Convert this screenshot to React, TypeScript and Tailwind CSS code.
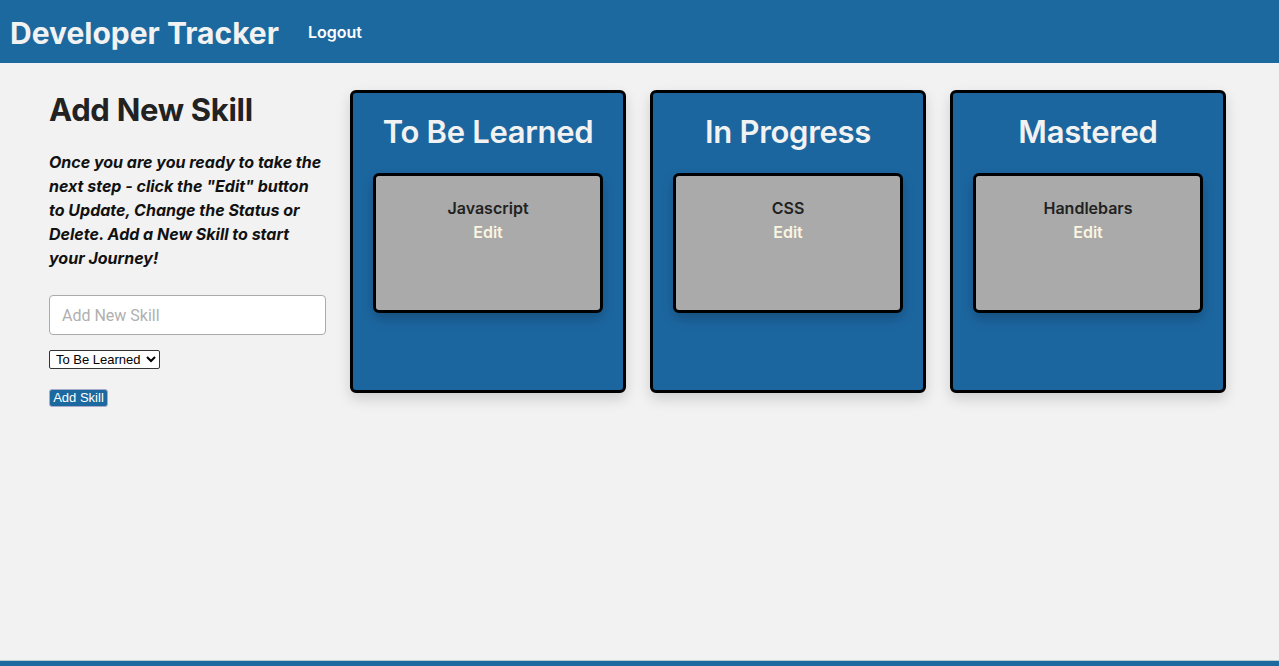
import { useState } from "react";

interface Skill {
  id: number;
  name: string;
  status: string;
}

const columns = ["To Be Learned", "In Progress", "Mastered"];

export default function App() {
  const [skills] = useState<Skill[]>([
    { id: 1, name: "Javascript", status: "To Be Learned" },
    { id: 2, name: "CSS", status: "In Progress" },
    { id: 3, name: "Handlebars", status: "Mastered" },
  ]);

  return (
    <div className="w-full bg-[#f2f2f2] text-[#222] font-['Inter',sans-serif]">
      <header className="h-[63px] bg-[#1c69a0] flex items-center pl-[10px]">
        <h1 className="text-[30px] font-bold text-[#f2f2f2] mt-[4px]">
          Developer Tracker
        </h1>
        <a className="ml-[29px] text-[16px] font-semibold text-white">
          Logout
        </a>
      </header>

      <main className="h-[597px] flex pl-[49px] pt-[27px]">
        <section className="w-[277px] flex flex-col">
          <h2 className="text-[31px] font-bold leading-[38px] mt-[1px] tracking-[-0.3px]">
            Add New Skill
          </h2>
          <p className="mt-[21px] text-[16px] leading-[24px] font-bold italic text-[#111]">
            Once you are you ready to take the next step - click the "Edit"
            button to Update, Change the Status or Delete. Add a New Skill to
            start your Journey!
          </p>
          <input
            placeholder="Add New Skill"
            className="mt-[25px] h-[40px] w-[277px] bg-white border border-[#aaa] rounded-[4px] px-[12px] text-[16px] placeholder:text-[#b0b0b0] font-['Roboto',sans-serif]"
          />
          <select className="mt-[15px] w-[111px] h-[19px] border border-[#333] rounded-[2px] bg-white text-[13px] leading-[15px] text-black font-['Liberation_Sans',sans-serif] px-[2px]">
            <option>To Be Learned</option>
            <option>In Progress</option>
            <option>Mastered</option>
          </select>
          <button className="mt-[20px] w-[59px] h-[18px] bg-[#1c69a0] border border-[#aac] rounded-[3px] text-white text-[13px] leading-[14px] font-['Liberation_Sans',sans-serif]">
            Add Skill
          </button>
        </section>

        <div className="flex gap-[24px] ml-[24px]">
          {columns.map((col) => (
            <div
              key={col}
              className="w-[276px] h-[303px] bg-[#1c66a0] border-[3px] border-black rounded-[6px] shadow-[0_6px_14px_rgba(0,0,0,0.15)] flex flex-col items-center"
            >
              <h3 className="mt-[20px] text-[31px] font-semibold text-[#f2f2f2] leading-[38px] tracking-[-0.3px]">
                {col}
              </h3>
              {skills
                .filter((s) => s.status === col)
                .map((s) => (
                  <div
                    key={s.id}
                    className="mt-[22px] w-[230px] h-[140px] bg-[#aaaaaa] border-[3px] border-black rounded-[6px] shadow-[0_6px_12px_rgba(0,0,0,0.2)] flex flex-col items-center pt-[20px]"
                  >
                    <span className="text-[16px] font-semibold leading-[24px] text-[#222]">
                      {s.name}
                    </span>
                    <span className="text-[16px] font-semibold leading-[24px] text-[#fbf5e1]">
                      Edit
                    </span>
                  </div>
                ))}
            </div>
          ))}
        </div>
      </main>

      <footer className="h-[40px] bg-[#1c69a0] border-t border-[#bcc]" />
    </div>
  );
}
